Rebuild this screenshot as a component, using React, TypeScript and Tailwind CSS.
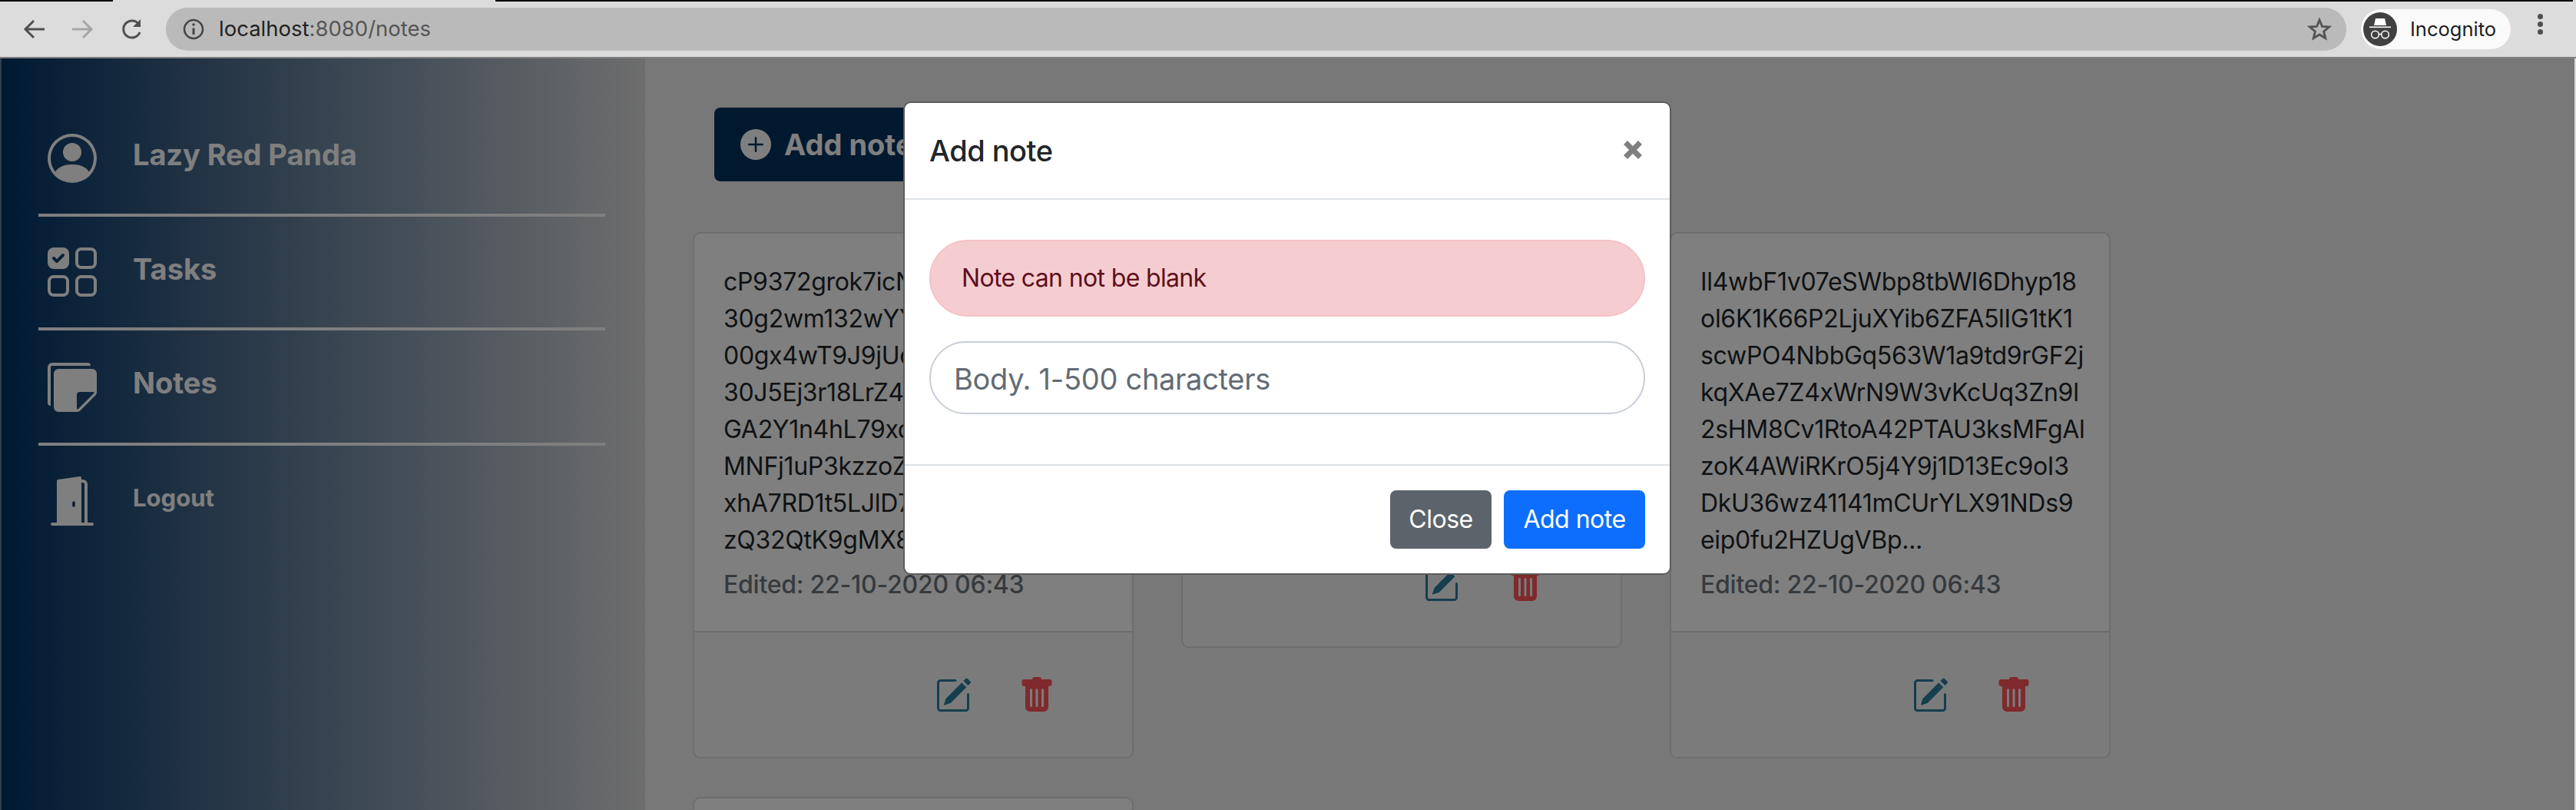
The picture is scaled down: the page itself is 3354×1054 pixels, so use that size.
import React from "react";
import {
  BsPersonCircle,
  BsUiChecksGrid,
  BsStickiesFill,
  BsDoorOpenFill,
  BsPencilSquare,
  BsTrashFill,
  BsPlusCircleFill,
} from "react-icons/bs";

const font = { fontFamily: "Inter, 'Liberation Sans', sans-serif" };

function BrowserBar() {
  return (
    <div className="flex flex-col bg-[#dcdcdc] h-[76px] border-b-2 border-[#808080]">
      <div className="flex h-[2px]">
        <div className="w-[147px] bg-black" />
        <div className="w-[498px]" />
        <div className="flex-1 bg-black mr-[4px]" />
      </div>
      <div className="flex items-start flex-1">
        <div className="flex items-center h-[56px] mt-[8px] w-[216px] pl-[30px] shrink-0">
          <svg width="30" height="26" viewBox="0 0 30 26" fill="none" stroke="#505050" strokeWidth="3">
            <path d="M28 13H4M14 2L3 13l11 11" />
          </svg>
          <svg className="ml-[32px]" width="30" height="26" viewBox="0 0 30 26" fill="none" stroke="#a6a6a6" strokeWidth="3">
            <path d="M2 13h24M16 2l11 11-11 11" />
          </svg>
          <svg className="ml-[35px]" width="30" height="30" viewBox="0 0 30 30" fill="none" stroke="#505050" strokeWidth="3">
            <path d="M25 19a11 11 0 1 1-1-10" />
            <path d="M26 2v10H16" fill="#505050" stroke="none" />
          </svg>
        </div>
        <div className="flex items-center w-[2839px] shrink-0 h-[56px] mt-[8px] bg-[#bababa] rounded-full">
          <svg className="ml-[22px]" width="28" height="28" viewBox="0 0 28 28" fill="none" stroke="#454545" strokeWidth="2.5">
            <circle cx="14" cy="14" r="12" />
            <path d="M14 12.5V21" strokeWidth="3" />
            <circle cx="14" cy="8" r="1.8" fill="#454545" stroke="none" />
          </svg>
          <span className="ml-[19px] text-[27.5px]" style={font}>
            <span className="text-[#222]">localhost</span>
            <span className="text-[#555]">:8080/notes</span>
          </span>
          <svg className="ml-auto mr-[19px]" width="32" height="32" viewBox="0 0 24 24" fill="none" stroke="#555" strokeWidth="2.2" strokeLinejoin="miter">
            <path d="M12 3l2.6 6.3 6.8.5-5.2 4.4 1.6 6.6L12 17.3l-5.8 3.5 1.6-6.6-5.2-4.4 6.8-.5z" />
          </svg>
        </div>
        <div className="flex items-center w-[195px] h-[52px] mt-[10px] ml-[19px] bg-[#fafafa] rounded-full pl-[3px] shrink-0">
          <svg width="44" height="44" viewBox="0 0 44 44">
            <circle cx="22" cy="22" r="22" fill="#414141" />
            <path d="M16 8h12l2 9H14z" fill="#fff" />
            <path d="M8 18.5h28v1.6H8z" fill="#fff" />
            <circle cx="15.5" cy="29" r="4.8" fill="none" stroke="#fff" strokeWidth="1.5" />
            <circle cx="28.5" cy="29" r="4.8" fill="none" stroke="#fff" strokeWidth="1.5" />
            <path d="M20 28.5h4" stroke="#fff" strokeWidth="1.5" />
          </svg>
          <span className="ml-[17px] text-[25.5px] text-[#1e1e1e]" style={font}>Incognito</span>
        </div>
        <div className="flex flex-col items-center gap-[3px] ml-[34px] mt-[16px] w-[8px] shrink-0">
          <div className="size-[7px] rounded-full bg-[#4e4e4e]" />
          <div className="size-[7px] rounded-full bg-[#4e4e4e]" />
          <div className="size-[7px] rounded-full bg-[#4e4e4e]" />
        </div>
      </div>
    </div>
  );
}

function SideRow({ icon, label, cls }: { icon: React.ReactNode; label: string; cls: string }) {
  return (
    <div className="flex items-center h-[64px] pl-[60px]">
      <span className="w-[64px] h-[64px] text-white shrink-0">{icon}</span>
      <span className={"ml-[47px] font-bold text-white " + cls}>{label}</span>
    </div>
  );
}

function Sidebar() {
  return (
    <aside className="w-[840px] shrink-0 pt-[98px] border-l-2 border-[#5f7f9f] bg-linear-to-r/srgb from-[#003366] to-[#dcdcdc]">
      <SideRow icon={<BsPersonCircle size={64} />} label="Lazy Red Panda" cls="text-[38px] mb-[10px] tracking-[-0.1px]" />
      <div className="h-[4px] w-[738px] ml-[48px] mt-[40px] mb-[40px] bg-white" />
      <SideRow icon={<BsUiChecksGrid size={64} />} label="Tasks" cls="text-[38px] mb-[8px]" />
      <div className="h-[4px] w-[738px] ml-[48px] mt-[40px] mb-[42px] bg-white" />
      <SideRow icon={<BsStickiesFill size={64} />} label="Notes" cls="text-[38px] mb-[12px]" />
      <div className="h-[4px] w-[738px] ml-[48px] mt-[40px] mb-[40px] bg-white" />
      <SideRow icon={<BsDoorOpenFill size={64} />} label="Logout" cls="text-[31px] mb-[8px]" />
    </aside>
  );
}

function Card({ lines }: { lines: string[] }) {
  return (
    <div className="w-[574px] rounded-[10px] border-2 border-[#dadada] bg-white overflow-hidden">
      <div className="px-[38px] pt-[39px] pb-[36px] flex flex-col">
        {lines.map((l, i) => (
          <div key={i} className="text-[32px] leading-[48px] whitespace-nowrap tracking-[-0.3px] text-[#212529]">{l}</div>
        ))}
        <div className="text-[32px] leading-[48px] mt-[10px] font-medium tracking-[-0.25px] text-[#6c757d]">Edited: 22-10-2020 06:43</div>
      </div>
      <div className="flex items-center h-[164px] border-t-2 border-[#dadada] bg-[#f7f7f7] pl-[313px] pt-[2px] gap-[61px]">
        <BsPencilSquare size={48} className="text-[#2a7d9c]" />
        <BsTrashFill size={48} className="text-[#ff5558]" />
      </div>
    </div>
  );
}

const c1 = [
  "cP9372grok7icNqT4bYvW81zLx",
  "30g2wm132wYYh6PdRq5fKs0aJ",
  "00gx4wT9J9jUqB2nVe7LtMz3Ck",
  "30J5Ej3r18LrZ4yH1oXw6GpDu",
  "GA2Y1n4hL79xdK8sFc0RvNi5Q",
  "MNFj1uP3kzzoZ6tWm2YbE9aSg",
  "xhA7RD1t5LJlD7qU3nCk8OfVe",
  "zQ32QtK9gMX8p...",
];
const c2 = [
  "Tz6Hq1pV8sLn3YwK0cRb5fGmJ",
  "a9Ed2XuN7oQi4ZtC1kSv6PjWg",
  "F3yMh8LrB5eDx0nUq7TsA2oKz",
  "w1GcV6jI9pR4lYf8NbH3mEtXu",
  "q5SaO2dK...",
];
const c3 = [
  "Il4wbF1v07eSWbp8tbWI6Dhyp18",
  "ol6K1K66P2LjuXYib6ZFA5lIG1tK1",
  "scwPO4NbbGq563W1a9td9rGF2j",
  "kqXAe7Z4xWrN9W3vKcUq3Zn9l",
  "2sHM8Cv1RtoA42PTAU3ksMFgAl",
  "zoK4AWiRKrO5j4Y9j1D13Ec9oI3",
  "DkU36wz41141mCUrYLX91NDs9",
  "eip0fu2HZUgVBp...",
];

function Main() {
  return (
    <main className="flex-1 bg-[#f0f0f0] pl-[62px] pt-[64px]">
      <button className="flex items-center h-[96px] w-[320px] ml-[28px] pl-[34px] rounded-[8px] bg-[#03335f] text-white text-[38px] font-bold">
        <BsPlusCircleFill size={40} />
        <span className="ml-[17px]">Add note</span>
      </button>
      <div className="grid grid-cols-[574px_574px_574px] gap-x-[62px] gap-y-[50px] items-start mt-[66px]">
        <Card lines={c1} />
        <Card lines={c2} />
        <Card lines={c3} />
        <Card lines={c2} />
      </div>
    </main>
  );
}

function Modal() {
  return (
    <div className="absolute inset-0 bg-black/50 flex justify-center items-start pt-[56px]">
      <div className="w-[1000px] bg-white rounded-[10px] border-2 border-[#5c5c5c] overflow-hidden">
        <div className="flex items-center justify-between h-[126px] pl-[32px] pr-[36px] border-b-2 border-[#dee2e6]">
          <h5 className="text-[38px] font-medium tracking-[-0.5px] text-[#212529]">Add note</h5>
          <svg width="24" height="24" viewBox="0 0 24 24" stroke="#808080" strokeWidth="7" className="mb-[2px]">
            <path d="M2.5 2.5l19 19M21.5 2.5l-19 19" />
          </svg>
        </div>
        <div className="px-[32px] pt-[52px] pb-[65px]">
          <div className="flex items-center h-[100px] rounded-full border-2 border-[#f5c2c7] bg-[#f5cdd1] pl-[40px] text-[32px] tracking-[-0.65px] text-[#5f0f1a]">
            Note can not be blank
          </div>
          <input
            readOnly
            placeholder="Body. 1-500 characters"
            className="mt-[32px] block w-full h-[95px] rounded-full border-2 border-[#c8ced8] pl-[30px] pt-[2px] text-[38px] tracking-[-0.3px] outline-none placeholder:text-[#636b74]"
          />
        </div>
        <div className="flex justify-end gap-[16px] p-[32px] border-t-2 border-[#dee2e6]">
          <button className="h-[76px] w-[132px] rounded-[8px] bg-[#5c636a] text-white text-[32px] tracking-[-0.5px]">Close</button>
          <button className="h-[76px] w-[184px] rounded-[8px] bg-[#0d6efd] text-white text-[32px] tracking-[-0.5px]">Add note</button>
        </div>
      </div>
    </div>
  );
}

export default function App() {
  return (
    <div className="w-[3354px] h-[1054px] overflow-hidden flex flex-col bg-[#dcdcdc]" style={font}>
      <BrowserBar />
      <div className="relative flex flex-1 min-h-0 overflow-hidden mr-[2px]">
        <Sidebar />
        <Main />
        <Modal />
      </div>
    </div>
  );
}
